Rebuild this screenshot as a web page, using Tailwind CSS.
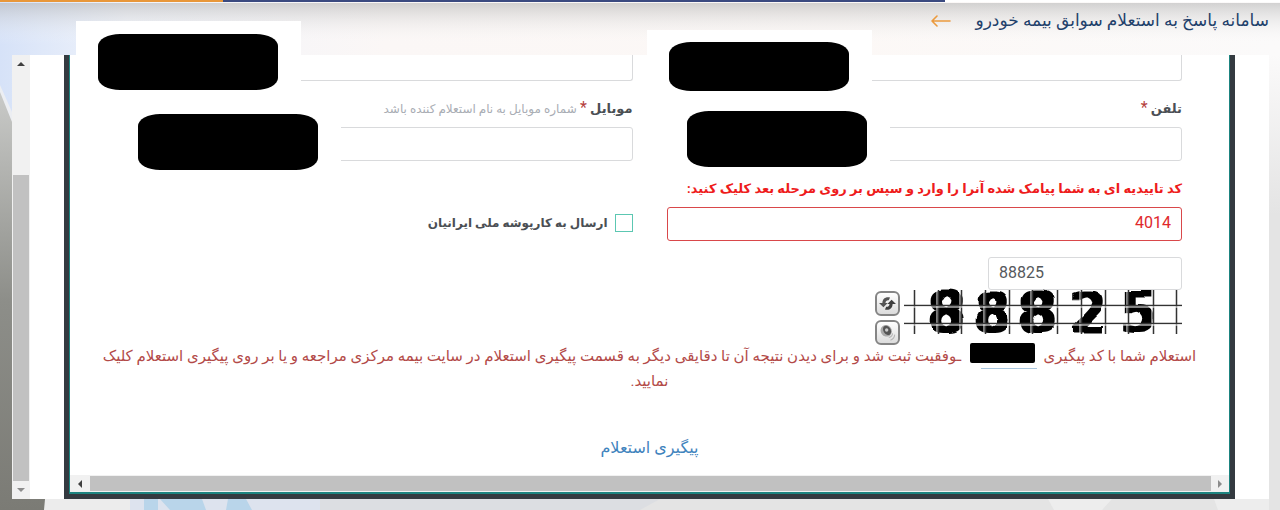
<!DOCTYPE html>
<html lang="fa" dir="rtl">
<head>
    <meta charset="utf-8">
    <meta name="viewport" content="width=device-width, initial-scale=1.0">
    <title>سامانه پاسخ به استعلام سوابق بیمه خودرو</title>
    <script src="https://cdn.jsdelivr.net/npm/@tailwindcss/browser@4"></script>
</head>
<body class="relative min-h-screen bg-[#e4e4e4] font-[Roboto,'DejaVu_Sans',sans-serif] text-[#4b4f54]">
    <!-- Page backdrop -->
    <svg class="absolute inset-0 w-full h-full" viewBox="0 0 1280 510" preserveAspectRatio="none" aria-hidden="true">
        <defs>
            <linearGradient id="sky" x1="0" y1="0" x2="1" y2="0">
                <stop offset="0" stop-color="#d6e2f8"/>
                <stop offset="0.1" stop-color="#f1f4fb"/>
                <stop offset="0.3" stop-color="#fbf7f6"/>
                <stop offset="0.65" stop-color="#fcf8f6"/>
                <stop offset="1" stop-color="#fbfafa"/>
            </linearGradient>
            <linearGradient id="shade" x1="0" y1="0" x2="0" y2="1">
                <stop offset="0" stop-color="#b0b0b0" stop-opacity="0.55"/>
                <stop offset="1" stop-color="#ffffff" stop-opacity="0"/>
            </linearGradient>
            <linearGradient id="wall" x1="0" y1="0" x2="0" y2="1">
                <stop offset="0" stop-color="#c9cac8"/>
                <stop offset="0.5" stop-color="#8d8e89"/>
                <stop offset="1" stop-color="#7b7b75"/>
            </linearGradient>
            <linearGradient id="edge" x1="0" y1="0" x2="0" y2="1">
                <stop offset="0" stop-color="#fbfafa"/>
                <stop offset="1" stop-color="#e4e4e4"/>
            </linearGradient>
        </defs>
        <rect width="1280" height="160" fill="url(#sky)"/>
        <rect x="1269" y="55" width="11" height="160" fill="url(#edge)"/>
        <rect y="3" width="1280" height="42" fill="url(#shade)"/>
        <path d="M0 85L12 112V140H0z" fill="#eceef2"/>
        <path d="M0 92L12 122L46 430V510H0z" fill="url(#wall)"/>
        <path d="M45 499H130V510H44z" fill="#ececec"/>
        <path d="M130 499H320V510H130z" fill="#dde3ee"/>
        <path d="M144 499H158V510H144zM160 499H202L206 510H170zM228 499H246L252 510H226z" fill="#b9d5ea"/>
        <path d="M320 499H660L640 510H320z" fill="#dcdee2"/>
        <path d="M1048 499H1112L1102 510H1054z" fill="#ededed"/>
        <path d="M1214 499H1269V510H1218z" fill="#ededed"/>
    </svg>

    <div class="relative flex h-[2px]">
        <div class="w-[26.2%] bg-white"></div>
        <div class="w-[56.4%] bg-[#3b4a80]"></div>
        <div class="flex-1 bg-[#e8973a]"></div>
    </div>

    <header class="relative h-[53px] px-[11px] flex items-start gap-6 text-[#1f416b]">
        <h1 class="text-[17px] leading-9">سامانه پاسخ به استعلام سوابق بیمه خودرو</h1>
        <svg class="w-5 h-3 mt-[13px]" viewBox="0 0 20 12" fill="none" stroke="#eb9a3e" stroke-width="1.6" stroke-linecap="round" stroke-linejoin="round" aria-hidden="true">
            <path d="M19 6H1M6 1L1 6L6 11"/>
        </svg>
    </header>

    <main class="relative ml-3 mr-[11px] mb-[11px] bg-white flex">
        <section class="flex-1 ml-[34px] mr-[34px] border-x-[5px] border-b-[5px] border-[#343a40]">
            <div class="border-x border-b-2 border-[#1d8480]">
                <form class="px-[47px]">
                    <div class="grid grid-cols-2 gap-x-[34px]">
                        <div class="relative">
                            <input type="text" aria-label="نام" class="block w-full h-[26px] px-2 bg-white border border-t-0 border-[#d9dadc] rounded-b-[3px]">
                            <div class="absolute -left-5 -top-[25px] w-[225px] h-[68px] bg-white">
                                <div class="mr-[23px] mt-3 w-[180px] h-[49px] bg-black rounded-[22px/12px]"></div>
                            </div>
                        </div>
                        <div class="relative">
                            <input type="text" aria-label="کد ملی" class="block w-full h-[26px] px-2 bg-white border border-t-0 border-[#d9dadc] rounded-b-[3px]">
                            <div class="absolute -left-[41px] -top-[34px] w-[225px] h-[71px] bg-white">
                                <div class="mr-[23px] mt-[13px] w-[180px] h-14 bg-black rounded-[22px/12px]"></div>
                            </div>
                        </div>

                        <div class="mt-4">
                            <label for="phone" class="block h-[30px] text-[13px] leading-6 font-bold">تلفن <span class="text-base leading-4 font-normal text-[#b5403c]">*</span></label>
                            <div class="relative">
                                <input id="phone" type="tel" class="block w-full h-[34px] px-2 bg-white border border-[#d9dadc] rounded-[3px]">
                                <div class="absolute -left-[5px] -top-4 w-[228px] h-14 bg-white">
                                    <div class="mr-[23px] w-[180px] h-14 bg-black rounded-[22px/12px]"></div>
                                </div>
                            </div>
                        </div>
                        <div class="mt-4">
                            <label for="mobile" class="block h-[30px] text-[13px] leading-6 font-bold">موبایل <span class="text-base leading-4 font-normal text-[#b5403c]">*</span> <span class="text-xs font-normal text-[#a9adb4]">شماره موبایل به نام استعلام کننده باشد</span></label>
                            <div class="relative">
                                <input id="mobile" type="tel" class="block w-full h-[34px] px-2 bg-white border border-[#d9dadc] rounded-[3px]">
                                <div class="absolute -left-1 -top-[13px] w-[228px] h-14 bg-white">
                                    <div class="mr-[23px] w-[180px] h-14 bg-black rounded-[22px/12px]"></div>
                                </div>
                            </div>
                        </div>

                        <div class="mt-4">
                            <label for="code" class="block h-[30px] text-[13px] leading-6 font-bold text-[#ee1c1c] whitespace-nowrap">کد تاییدیه ای به شما پیامک شده آنرا را وارد و سپس بر روی مرحله بعد کلیک کنید:</label>
                            <input id="code" type="text" value="4014" class="block w-full h-[34px] px-[10px] pb-1 bg-white border border-[#d9484a] rounded-[3px] text-base text-[#e0282b]">
                        </div>
                        <div class="mt-[50px] flex items-center gap-[7px] h-6">
                            <input id="folder" type="checkbox" class="appearance-none w-[18px] h-[18px] border border-[#5cc7b2] bg-white">
                            <label for="folder" class="text-xs leading-6 font-bold">ارسال به کارپوشه ملی ایرانیان</label>
                        </div>
                    </div>

                    <div class="mt-4 flex flex-col items-start">
                        <input type="text" dir="ltr" value="88825" aria-label="کد امنیتی" class="block w-[194px] h-[33px] px-[10px] pb-[2px] bg-white border border-[#d9dadc] rounded-[3px] text-base text-[#55595c]">
                        <div class="flex gap-1 h-[54px]">
                            <svg class="w-[278px] h-11 overflow-visible" viewBox="0 0 278 44" direction="ltr" role="img" aria-label="تصویر امنیتی">
                                <defs>
                                    <filter id="warp" x="-5%" y="-10%" width="110%" height="120%">
                                        <feMorphology in="SourceGraphic" operator="dilate" radius="3 0.500" result="thick"/>
                                        <feTurbulence type="fractalNoise" baseFrequency="0.03" numOctaves="1" seed="4" result="noise"/>
                                        <feDisplacementMap in="thick" in2="noise" scale="7" xChannelSelector="R" yChannelSelector="G"/>
                                        <feGaussianBlur stdDeviation="0.500"/>
                                    </filter>
                                </defs>
                                <g font-family="DejaVu Sans" font-size="54" fill="#000" filter="url(#warp)">
                                    <text x="25" y="41">8</text>
                                    <text x="71" y="41">8</text>
                                    <text x="117" y="41">8</text>
                                    <text x="167" y="41">2</text>
                                    <text x="218" y="41">5</text>
                                </g>
                                <path d="M9 0V44M33 0V44M56 0V44M80 0V44M104 0V44M127 0V44M152 0V44M176 0V44M200 0V44M223 0V44M248 0V44M271 0V44" stroke="#fff" stroke-width="1"/>
                                <path d="M10.500 0V44M34.500 0V44M57.500 0V44M81.500 0V44M105.500 0V44M128.500 0V44M153.500 0V44M177.500 0V44M201.500 0V44M224.500 0V44M249.500 0V44M272.500 0V44M0 15.500H278M0 33.500H278" stroke="#333" stroke-width="1.500"/>
                                <path d="M0 17H278M0 35H278" stroke="#fff" stroke-width="1"/>
                            </svg>
                            <div class="flex flex-col gap-1 pt-px">
                                <button type="button" aria-label="تصویر جدید" class="w-[25px] h-[25px] shrink-0 p-[2px] border-2 border-[#858585] rounded-md bg-linear-to-b from-white to-[#dcdcdc]">
                                    <svg class="w-full h-full" viewBox="0 0 20 20" aria-hidden="true">
                                        <path d="M4 9.500C4 4 8.500 1.500 13 3L11.500 6.300C9.500 5.800 7.800 7 7.600 9.500H10.200L5.200 14.500L0 9.500z" fill="#555"/>
                                        <path d="M16 10.500C16 16 11.500 18.500 7 17L8.500 13.700C10.500 14.200 12.200 13 12.400 10.500H9.800L14.800 5.500L20 10.500z" fill="#3f3f3f"/>
                                    </svg>
                                </button>
                                <button type="button" aria-label="پخش صوتی" class="w-[25px] h-[25px] shrink-0 p-[2px] border-2 border-[#858585] rounded-md bg-linear-to-b from-white to-[#dcdcdc]">
                                    <svg class="w-full h-full" viewBox="0 0 20 20" aria-hidden="true">
                                        <ellipse cx="8.500" cy="8" rx="6.500" ry="7" fill="#a8a8a8" transform="rotate(-35 8.500 8)"/>
                                        <ellipse cx="9.500" cy="7.500" rx="4.200" ry="5.800" fill="#555" transform="rotate(-35 9.500 7.500)"/>
                                        <circle cx="9" cy="7" r="2" fill="#ccc"/>
                                        <path d="M16 11Q15.500 15 11.500 16M18.500 12.500Q18 17.500 13.500 19" fill="none" stroke="#b5b5b5" stroke-width="1.200"/>
                                    </svg>
                                </button>
                            </div>
                        </div>
                    </div>
                </form>

                <div class="px-[27px] text-center leading-[25px]">
                    <p class="text-[15px] leading-[25px] text-[#b34a48] whitespace-nowrap">
                        استعلام شما با کد پیگیری
                        <span class="relative inline-block align-middle w-[65px] h-5 mx-[5px] -mt-2 bg-black rounded-[2px]"><span class="absolute -right-[2px] -bottom-[6px] w-14 h-px bg-[#a9c6df]"></span></span>
                        ـوفقیت ثبت شد و برای دیدن نتیجه آن تا دقایقی دیگر به قسمت پیگیری استعلام در سایت بیمه مرکزی مراجعه و یا بر روی پیگیری استعلام کلیک<br>
                        نمایید.
                    </p>
                    <a href="#" class="inline-block mt-[41px] mb-[15px] text-base leading-[25px] text-[#3f83bd]">پیگیری استعلام</a>
                </div>

                <!-- Horizontal scroll bar -->
                <div dir="ltr" class="flex h-[17px] bg-[#f1f1f1]">
                    <button type="button" aria-label="پیمایش به چپ" class="w-5 flex items-center justify-center">
                        <svg class="w-2 h-2" viewBox="0 0 8 8" aria-hidden="true"><path d="M6 0V8L2 4z" fill="#404040"/></svg>
                    </button>
                    <div class="flex-1 my-px bg-[#c1c1c1]"></div>
                    <button type="button" aria-label="پیمایش به راست" class="w-[18px] flex items-center justify-center">
                        <svg class="w-2 h-2" viewBox="0 0 8 8" aria-hidden="true"><path d="M2 0V8L6 4z" fill="#8c8c8c"/></svg>
                    </button>
                </div>
            </div>
        </section>

        <!-- Vertical scroll bar -->
        <div class="w-[18px] px-px flex flex-col bg-[#f1f1f1]">
            <button type="button" aria-label="پیمایش به بالا" class="h-[18px] flex items-center justify-center">
                <svg class="w-2 h-2" viewBox="0 0 8 8" aria-hidden="true"><path d="M0 6H8L4 2z" fill="#404040"/></svg>
            </button>
            <div class="basis-[23%]"></div>
            <div class="flex-1 bg-[#c1c1c1]"></div>
            <button type="button" aria-label="پیمایش به پایین" class="h-[18px] flex items-center justify-center">
                <svg class="w-2 h-2" viewBox="0 0 8 8" aria-hidden="true"><path d="M0 2H8L4 6z" fill="#8c8c8c"/></svg>
            </button>
        </div>
    </main>
</body>
</html>
